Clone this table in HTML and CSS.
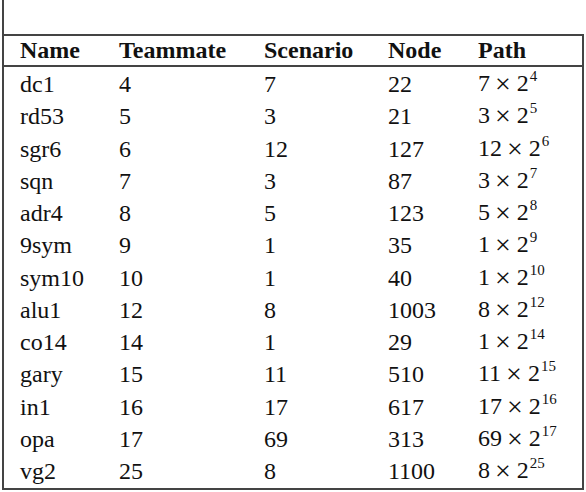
FILE: index.html
```html
<!DOCTYPE html>
<html>
<head>
<meta charset="utf-8">
<link rel="stylesheet" href="styles.css">
</head>
<body>
<div class="frame">
  <div class="table">
    <div class="row head">
      <span>Name</span><span>Teammate</span><span>Scenario</span><span>Node</span><span>Path</span>
    </div>
    <div class="body">
      <div class="row"><span>dc1</span><span>4</span><span>7</span><span>22</span><span class="m">7<i>×</i>2<sup>4</sup></span></div>
      <div class="row"><span>rd53</span><span>5</span><span>3</span><span>21</span><span class="m">3<i>×</i>2<sup>5</sup></span></div>
      <div class="row"><span>sgr6</span><span>6</span><span>12</span><span>127</span><span class="m">12<i>×</i>2<sup>6</sup></span></div>
      <div class="row"><span>sqn</span><span>7</span><span>3</span><span>87</span><span class="m">3<i>×</i>2<sup>7</sup></span></div>
      <div class="row"><span>adr4</span><span>8</span><span>5</span><span>123</span><span class="m">5<i>×</i>2<sup>8</sup></span></div>
      <div class="row"><span>9sym</span><span>9</span><span>1</span><span>35</span><span class="m">1<i>×</i>2<sup>9</sup></span></div>
      <div class="row"><span>sym10</span><span>10</span><span>1</span><span>40</span><span class="m">1<i>×</i>2<sup>10</sup></span></div>
      <div class="row"><span>alu1</span><span>12</span><span>8</span><span>1003</span><span class="m">8<i>×</i>2<sup>12</sup></span></div>
      <div class="row"><span>co14</span><span>14</span><span>1</span><span>29</span><span class="m">1<i>×</i>2<sup>14</sup></span></div>
      <div class="row"><span>gary</span><span>15</span><span>11</span><span>510</span><span class="m">11<i>×</i>2<sup>15</sup></span></div>
      <div class="row"><span>in1</span><span>16</span><span>17</span><span>617</span><span class="m">17<i>×</i>2<sup>16</sup></span></div>
      <div class="row"><span>opa</span><span>17</span><span>69</span><span>313</span><span class="m">69<i>×</i>2<sup>17</sup></span></div>
      <div class="row"><span>vg2</span><span>25</span><span>8</span><span>1100</span><span class="m">8<i>×</i>2<sup>25</sup></span></div>
    </div>
  </div>
</div>
</body>
</html>
```
FILE: styles.css
```css
html, body {
  margin: 0;
  padding: 0;
  background: #fff;
}
body {
  font-family: "Liberation Serif", "Times New Roman", serif;
  font-size: 24px;
  color: #111;
  width: 586px;
  height: 492px;
  overflow: hidden;
}
.frame {
  margin-left: 2px;
  width: 582px;
  height: 490px;
  border-left: 2px solid #444;
  padding-top: 34px;
  box-sizing: border-box;
}
.table {
  border-top: 2px solid #444;
  border-right: 2px solid #444;
  border-bottom: 2px solid #444;
  height: 456px;
  box-sizing: border-box;
}
.row {
  display: grid;
  grid-template-columns: 99px 145px 124px 90px 1fr;
  padding-left: 16px;
  padding-bottom: 2px;
  box-sizing: border-box;
  height: 32.25px;
  align-items: center;
  line-height: 1;
}
.head {
  font-weight: bold;
  height: 31px;
  border-bottom: 2px solid #444;
  padding-bottom: 1px;
}
.body {
  padding-top: 2px;
}
.m {
  white-space: nowrap;
}
.m i {
  font-style: normal;
  font-size: 28px;
  line-height: 1;
  vertical-align: -2px;
  margin: 0 6px 0 5px;
}
.m sup {
  font-size: 15px;
  vertical-align: 0;
  position: relative;
  top: -10px;
  margin-left: 1px;
}
```
